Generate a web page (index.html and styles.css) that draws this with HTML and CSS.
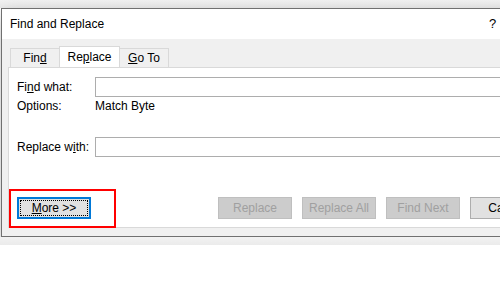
FILE: index.html
```html
<!DOCTYPE html>
<html>
<head>
    <title>Find and Replace</title>
    <link rel="stylesheet" href="styles.css">
</head>
<body>
    <div class="dialog">
        <div class="titlebar">
            <span class="title">Find and Replace</span>
            <span class="help">?</span>
        </div>
        <div class="client">
            <div class="tabs">
                <div class="tab">Fin<u>d</u></div>
                <div class="tab active">Re<u>p</u>lace</div>
                <div class="tab"><u>G</u>o To</div>
            </div>
            <div class="panel">
                <div class="field">
                    <label class="label">Fi<u>n</u>d what:</label>
                    <input class="input" type="text">
                </div>
                <div class="options">
                    <span class="label">Options:</span>
                    <span>Match Byte</span>
                </div>
                <div class="field field-replace">
                    <label class="label">Replace w<u>i</u>th:</label>
                    <input class="input" type="text">
                </div>
                <div class="buttons">
                    <button class="btn btn-more"><u>M</u>ore &gt;&gt;</button>
                    <button class="btn" disabled>Replace</button>
                    <button class="btn" disabled>Replace All</button>
                    <button class="btn" disabled>Find Next</button>
                    <button class="btn btn-cancel">Cancel</button>
                </div>
                <!-- red annotation box around the More button -->
                <div class="highlight"></div>
            </div>
        </div>
    </div>
</body>
</html>
```
FILE: styles.css
```css
/* Page behind the dialog */
body {
    margin: 0;
    overflow: hidden;
    background: linear-gradient(#f2f2f2 0, #ebebeb 8px, #ffffff 8px);
    font-family: "Liberation Sans", Arial, sans-serif;
    font-size: 12px;
    color: #000;
}

u {
    text-decoration: underline;
    text-underline-offset: 1px;
}

/* Dialog window */
.dialog {
    margin: 8px 0 0 1px;
    width: 560px;
    border: 1px solid #707070;
    background: #f0f0f0;
    box-shadow: 0 8px 18px rgba(0, 0, 0, 0.28);
}

.titlebar {
    display: flex;
    align-items: center;
    height: 30px;
    padding: 0 8px;
    background: #fff;
}

.title {
    flex: 1;
}

.help {
    display: block;
    width: 65px;
    color: #000;
    font-size: 13px;
    line-height: 16px;
}

/* Tabs + panel */
.client {
    padding: 7px 0 8px 6px;
}

.tabs {
    display: flex;
    align-items: flex-end;
    margin-left: 2px;
}

.tab {
    box-sizing: border-box;
    width: 50px;
    height: 19px;
    line-height: 18px;
    text-align: center;
    border: 1px solid #d9d9d9;
    border-bottom: none;
    background: #f0f0f0;
}

.tab.active {
    position: relative;
    width: 61px;
    height: 22px;
    line-height: 20px;
    margin: 0 -1px -1px;
    background: #fff;
}

.panel {
    position: relative;
    border: 1px solid #d9d9d9;
    background: #fff;
    padding: 9px 0 8px 8px;
}

.field {
    display: flex;
    align-items: center;
}

.label {
    width: 78px;
    flex: none;
}

.input {
    flex: 1;
    box-sizing: border-box;
    height: 20px;
    margin: 0;
    border: 1px solid #adadad;
    background: #fff;
    padding: 0 3px;
}

.options {
    display: flex;
    height: 16px;
    line-height: 16px;
    margin-top: 1px;
}

.field-replace {
    margin-top: 23px;
}

/* Bottom buttons */
.buttons {
    display: flex;
    gap: 10px;
    margin-top: 40px;
}

.btn {
    box-sizing: border-box;
    flex: none;
    width: 74px;
    height: 22px;
    padding: 0;
    font: inherit;
    color: #000;
    background: #e1e1e1;
    border: 1px solid #adadad;
}

.btn:disabled {
    color: #a0a0a0;
    background: #cccccc;
    border-color: #bfbfbf;
}

.btn-more {
    position: relative;
    margin-right: 117px;
    border: 2px solid #0078d7;
}

.btn-more::after {
    content: '';
    position: absolute;
    top: 1px;
    left: 1px;
    right: 1px;
    bottom: 1px;
    border: 1px dotted #000;
}

.highlight {
    position: absolute;
    left: 0;
    top: 121px;
    width: 103px;
    height: 35px;
    border: 2px solid #ff0000;
}
```
